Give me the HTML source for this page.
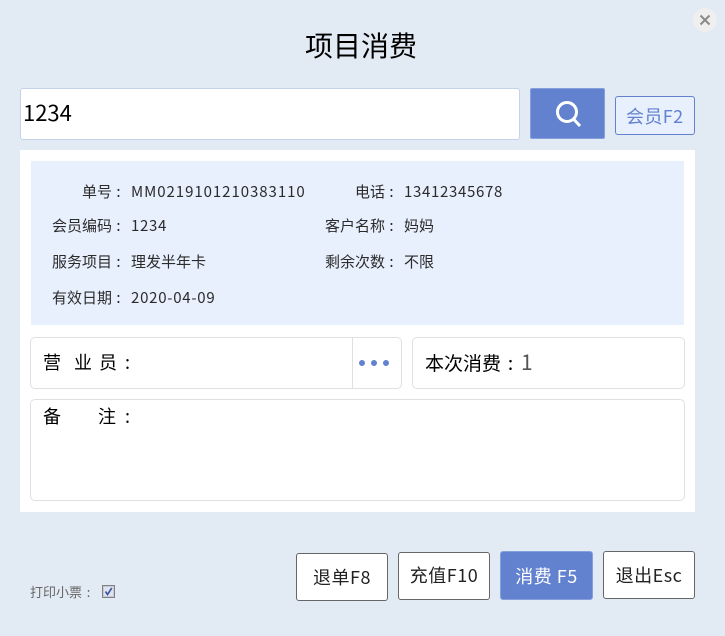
<!DOCTYPE html>
<html lang="zh">
<head>
<meta charset="utf-8">
<style>
html,body{margin:0;padding:0;}
body{width:725px;height:636px;background:#e2eaf4;position:relative;overflow:hidden;font-family:"Liberation Sans","Noto Sans CJK SC",sans-serif;}
.a{position:absolute;box-sizing:border-box;}
.t{position:absolute;white-space:pre;font-family:"Noto Sans CJK SC","Liberation Sans",sans-serif;line-height:20px;}
.c{display:inline-block;width:1em;text-align:center;position:relative;left:-1px;}
.s{font-size:15px;color:#2b2b2b;}
.box{background:#fff;border:1px solid #e0e0e0;border-radius:5px;}
.btn{background:#fff;border:1px solid #666;border-radius:3px;}
.l{font-size:18px;color:#000;line-height:26px;}
.b{font-size:18px;letter-spacing:.5px;color:#222;line-height:24px;text-align:center;}
.dot{position:absolute;width:6px;height:6px;border-radius:50%;background:#6282d0;top:360px;}
</style>
</head>
<body>
<div class="a" style="left:693px;top:8px;width:24px;height:24px;border-radius:50%;background:#efefef;"></div>
<svg class="a" style="left:693px;top:8px;" width="24" height="24" viewBox="0 0 24 24"><path d="M7.500 7.500L16.500 16.500M16.500 7.500L7.500 16.500" stroke="#8a8a8a" stroke-width="2" fill="none"/></svg>

<div class="t" style="left:305px;top:27px;font-size:28px;line-height:36px;color:#000;">项目消费</div>

<div class="a" style="left:20px;top:88px;width:500px;height:52px;background:#fff;border:1px solid #c5d2ec;border-radius:3px;"></div>
<div class="t" style="left:23px;top:98px;font-size:22px;line-height:28px;color:#000;">1234</div>

<div class="a" style="left:530px;top:88px;width:75px;height:51px;background:#6282d0;border:1px solid #86a0dc;border-radius:2px;"></div>
<svg class="a" style="left:550px;top:96px;" width="36" height="36" viewBox="0 0 36 36"><circle cx="17" cy="16" r="9.500" fill="none" stroke="#fff" stroke-width="3"/><path d="M23.500 23L30 30" stroke="#fff" stroke-width="3" fill="none"/></svg>

<div class="a" style="left:615px;top:96px;width:80px;height:39px;background:#e8effd;border:1px solid #6282d0;border-radius:3px;"></div>
<div class="t" style="left:626px;top:104px;font-size:18px;letter-spacing:.4px;line-height:24px;color:#6282d0;">会员F2</div>

<div class="a" style="left:20px;top:150px;width:675px;height:362px;background:#fff;"></div>
<div class="a" style="left:31px;top:161px;width:653px;height:164px;background:#e8effd;"></div>

<div class="t s" style="left:82px;top:182px;">单号<span class="c">:</span></div>
<div class="t s" style="left:131px;top:182px;letter-spacing:.95px;">MM0219101210383110</div>
<div class="t s" style="left:355px;top:182px;">电话<span class="c">:</span></div>
<div class="t s" style="left:404px;top:182px;letter-spacing:.68px;">13412345678</div>

<div class="t s" style="left:52px;top:216px;">会员编码<span class="c">:</span></div>
<div class="t s" style="left:131px;top:216px;letter-spacing:.68px;">1234</div>
<div class="t s" style="left:325px;top:216px;">客户名称<span class="c">:</span></div>
<div class="t s" style="left:404px;top:216px;">妈妈</div>

<div class="t s" style="left:52px;top:252px;">服务项目<span class="c">:</span></div>
<div class="t s" style="left:131px;top:252px;">理发半年卡</div>
<div class="t s" style="left:325px;top:252px;">剩余次数<span class="c">:</span></div>
<div class="t s" style="left:404px;top:252px;">不限</div>

<div class="t s" style="left:52px;top:288px;">有效日期<span class="c">:</span></div>
<div class="t s" style="left:131px;top:288px;letter-spacing:.74px;">2020-04-09</div>

<div class="a box" style="left:30px;top:337px;width:372px;height:52px;"></div>
<div class="a" style="left:352px;top:338px;width:1px;height:50px;background:#e0e0e0;"></div>
<div class="t l" style="left:43px;top:349px;">营</div>
<div class="t l" style="left:74px;top:349px;">业</div>
<div class="t l" style="left:99px;top:349px;">员</div>
<div class="t l" style="left:125px;top:349px;">:</div>
<div class="dot" style="left:359px;"></div>
<div class="dot" style="left:371px;"></div>
<div class="dot" style="left:383px;"></div>

<div class="a box" style="left:412px;top:337px;width:273px;height:52px;"></div>
<div class="t l" style="left:425px;top:349px;font-size:19px;">本次消费<span class="c" style="left:0;">:</span><span style="color:#555;font-size:21px;margin-left:1px;">1</span></div>

<div class="a box" style="left:30px;top:399px;width:655px;height:102px;"></div>
<div class="t l" style="left:43px;top:403px;">备</div>
<div class="t l" style="left:98px;top:403px;">注</div>
<div class="t l" style="left:125px;top:403px;">:</div>

<div class="t" style="left:30px;top:582px;font-size:13px;color:#666;">打印小票<span class="c" style="left:0;">:</span></div>
<div class="a" style="left:102px;top:585px;width:13px;height:13px;background:#dfe3ef;border:1px solid #808080;box-shadow:inset 0 0 0 1px #c6cad6;"></div>
<svg class="a" style="left:102px;top:585px;" width="13" height="13" viewBox="0 0 13 13"><path d="M3.500 6.500L5.500 9.500L9.800 3" stroke="#3b55a5" stroke-width="1.600" fill="none"/></svg>

<div class="a btn" style="left:296px;top:553px;width:92px;height:48px;"></div>
<div class="t b" style="left:296px;top:565px;width:92px;">退单F8</div>
<div class="a btn" style="left:398px;top:552px;width:92px;height:48px;"></div>
<div class="t b" style="left:398px;top:563px;width:92px;">充值F10</div>
<div class="a" style="left:500px;top:551px;width:93px;height:49px;background:#6282d0;border:1px solid #86a0dc;border-radius:3px;"></div>
<div class="t b" style="left:500px;top:564px;width:93px;color:#fff;">消费 F5</div>
<div class="a btn" style="left:603px;top:551px;width:92px;height:48px;"></div>
<div class="t b" style="left:603px;top:563px;width:92px;">退出Esc</div>
</body>
</html>
